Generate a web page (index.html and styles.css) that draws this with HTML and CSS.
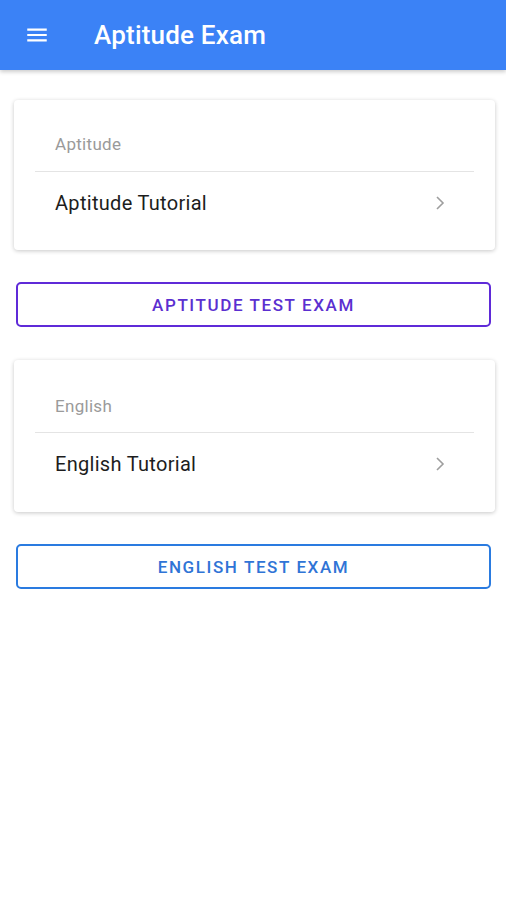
FILE: index.html
```html
<!DOCTYPE html>
<html lang="en">
<head>
  <meta charset="UTF-8" />
  <meta name="viewport" content="width=device-width, initial-scale=1.0" />
  <title>Aptitude Exam</title>
  <link rel="stylesheet" href="styles.css">
</head>
<body>

  <header class="topbar">
    <svg class="menu-icon" width="24" height="24" viewBox="0 0 24 24">
      <path d="M3 6h18v2H3zM3 11h18v2H3zM3 16h18v2H3z" fill="#fff"/>
    </svg>
    <h1>Aptitude Exam</h1>
  </header>

  <main>
    <section class="card">
      <div class="card-label">Aptitude</div>
      <a class="card-item" href="#">
        <span>Aptitude Tutorial</span>
        <svg width="24" height="24" viewBox="0 0 24 24">
          <path d="M9 6l6 6-6 6" fill="none" stroke="#9e9e9e" stroke-width="1.6"/>
        </svg>
      </a>
    </section>

    <a class="btn btn-purple" href="#">Aptitude Test Exam</a>

    <section class="card card-second">
      <div class="card-label">English</div>
      <a class="card-item" href="#">
        <span>English Tutorial</span>
        <svg width="24" height="24" viewBox="0 0 24 24">
          <path d="M9 6l6 6-6 6" fill="none" stroke="#9e9e9e" stroke-width="1.6"/>
        </svg>
      </a>
    </section>

    <a class="btn btn-blue" href="#">English Test Exam</a>
  </main>

</body>
</html>
```

FILE: styles.css
```css
body {
  margin: 0;
  font-family: Roboto, 'Noto Sans', sans-serif;
  background: #fff;
  color: #222;
}
.topbar {
  height: 70px;
  background: #3b82f6;
  display: flex;
  align-items: center;
  padding: 0 24px;
  box-shadow: 0 2px 4px rgba(0,0,0,0.2);
}
.topbar h1 {
  margin: 0 0 0 44px;
  color: #fff;
  font-size: 26px;
  font-weight: 500;
  letter-spacing: 0.2px;
}
.menu-icon {
  width: 26px;
  height: 26px;
}
main {
  padding: 30px 11px 30px 14px;
  display: flex;
  flex-direction: column;
}
.card {
  background: #fff;
  border-radius: 4px;
  box-shadow: 0 1px 4px rgba(0,0,0,0.22);
  padding: 0 21px;
  height: 150px;
}
.card-second {
  margin-top: 1px;
  height: 152px;
}
.card-label {
  color: #9a9a9a;
  font-size: 17px;
  letter-spacing: 0.3px;
  padding: 34px 0 0 20px;
  height: 37px;
  border-bottom: 1px solid #e4e4e4;
}
.card-second .card-label {
  padding-top: 36px;
  height: 36px;
}
.card-item {
  display: flex;
  align-items: center;
  justify-content: space-between;
  padding: 0 22px 0 20px;
  height: 62px;
  color: #1d1d1d;
  text-decoration: none;
  font-size: 20px;
  letter-spacing: 0.3px;
}
.btn {
  margin: 32px 4px 32px 2px;
  height: 41px;
  border: 2px solid;
  border-radius: 5px;
  display: flex;
  align-items: center;
  justify-content: center;
  text-transform: uppercase;
  text-decoration: none;
  font-size: 17px;
  font-weight: 500;
  letter-spacing: 1.6px;
}
.btn-purple {
  color: #5b2fd0;
  border-color: #5f2ad8;
}
.btn-blue {
  margin-bottom: 0;
  color: #2f74d6;
  border-color: #2a7be0;
}
```
